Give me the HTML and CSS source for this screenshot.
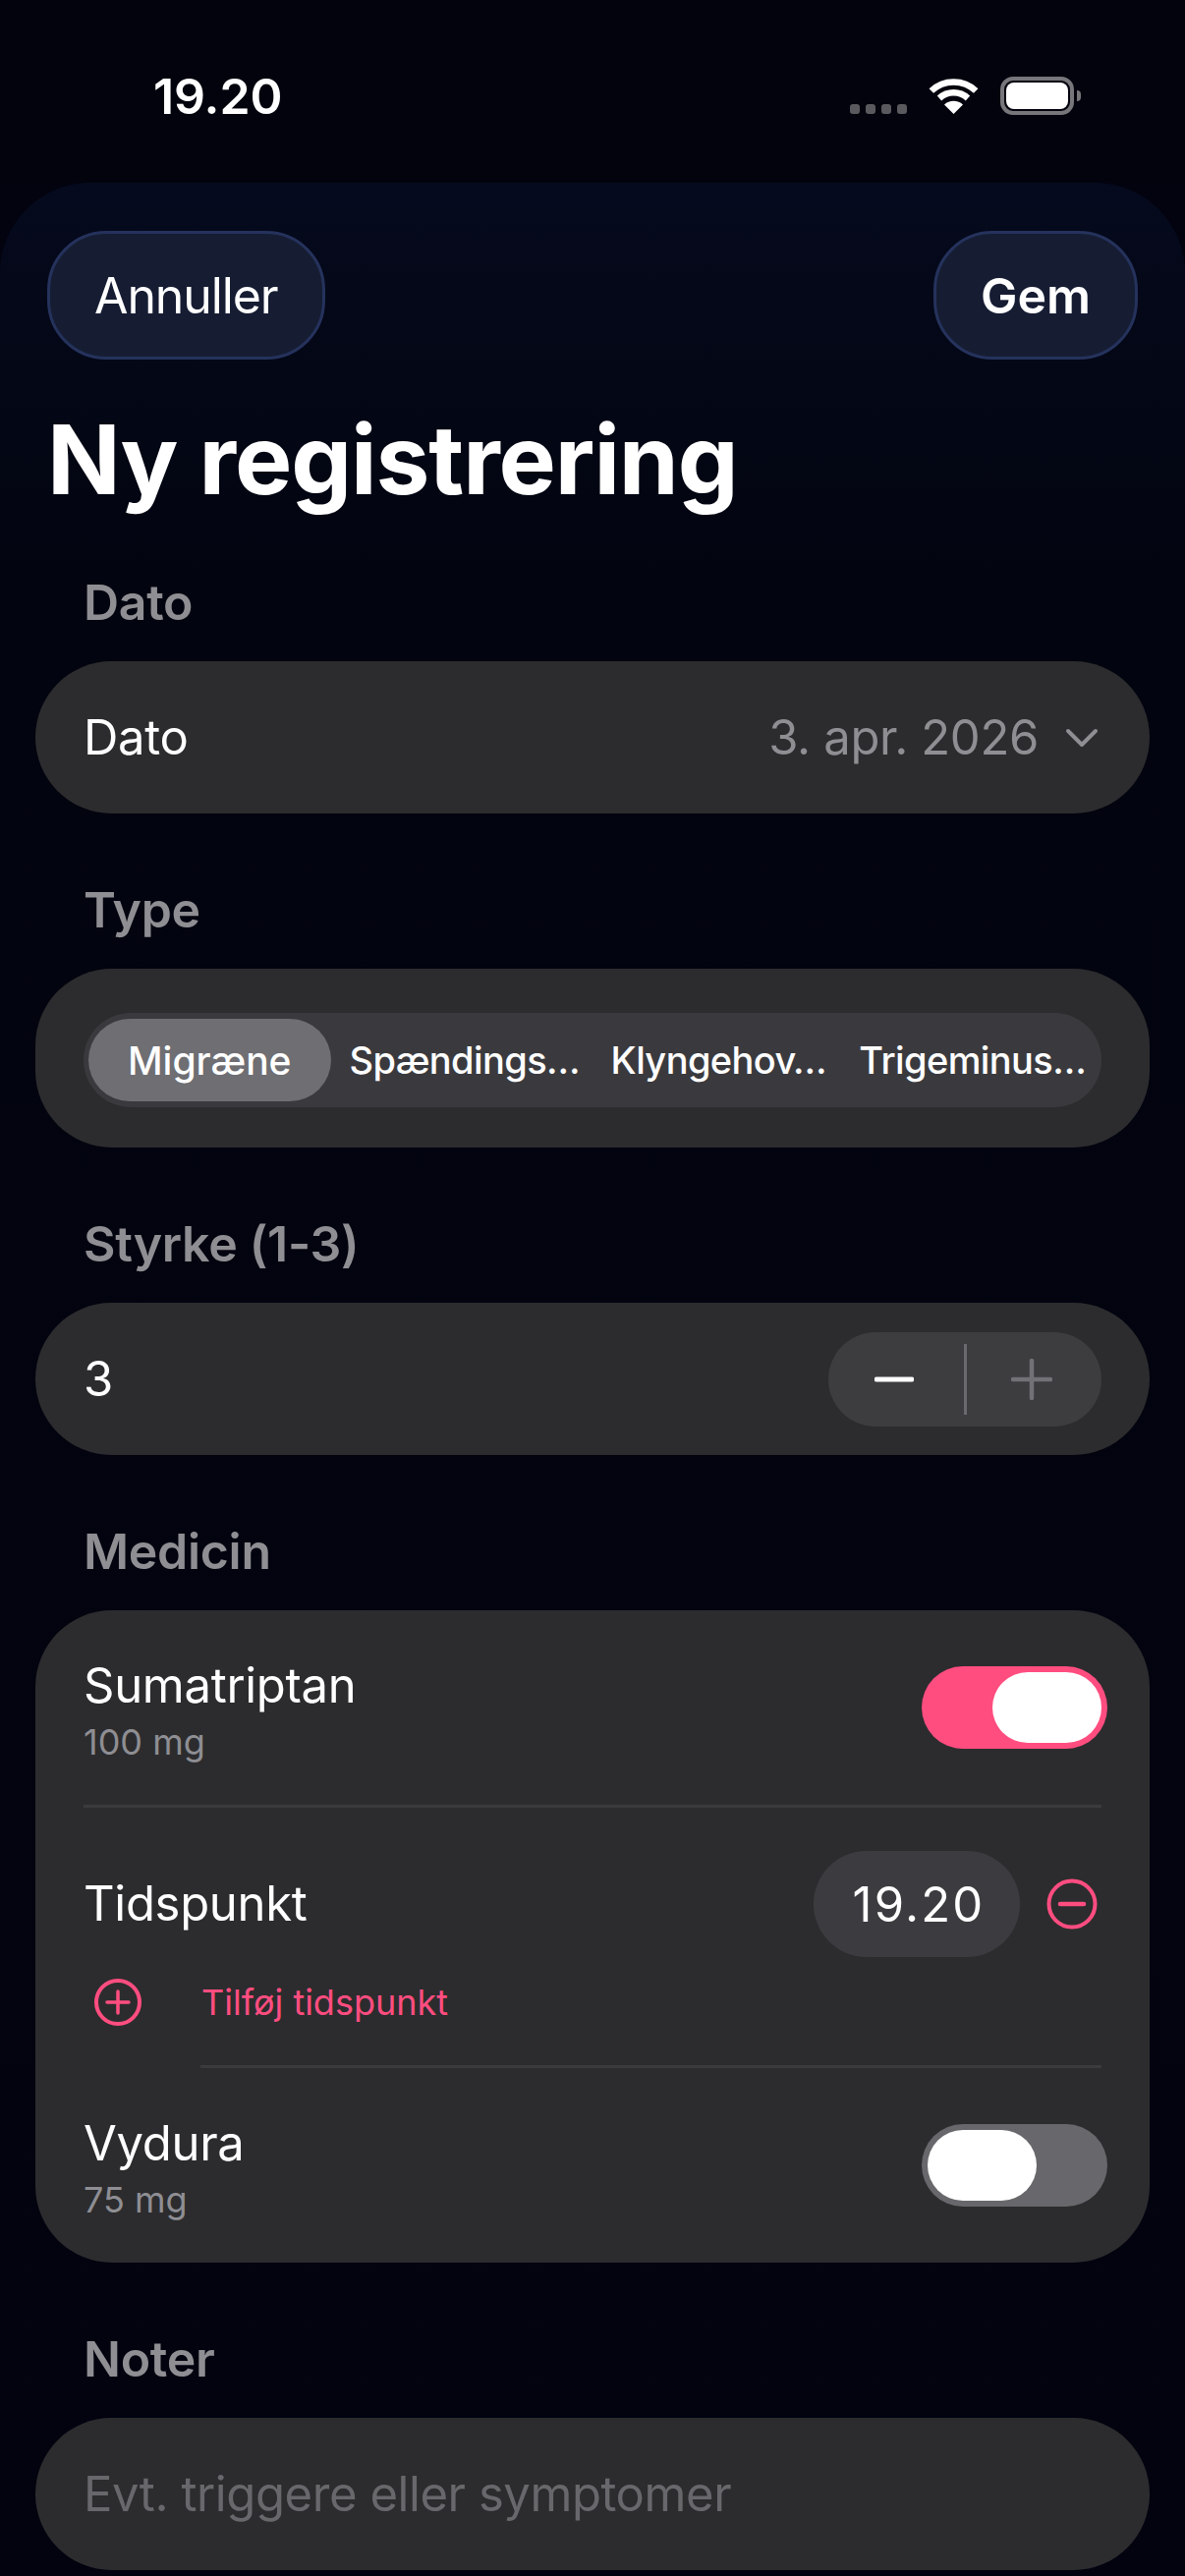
FILE: index.html
```html
<!DOCTYPE html>
<html lang="da">
<head>
<meta charset="utf-8">
<title>Ny registrering</title>
<link rel="stylesheet" href="styles.css">
</head>
<body>
<div class="phone">
  <header class="status">
    <span class="clock">19.20</span>
    <div class="status-icons">
      <div class="dots"><i></i><i></i><i></i><i></i></div>
      <svg class="wifi" viewBox="0 0 51 37" width="51" height="37"><path d="M25.5 37 16 27.5a14 14 0 0 1 19 0Z" fill="#fff"/><path d="M11 21a21.500 21.500 0 0 1 29 0" fill="none" stroke="#fff" stroke-width="6.500"/><path d="M2.800 13.500a33 33 0 0 1 45.400 0" fill="none" stroke="#fff" stroke-width="6.500"/></svg>
      <div class="battery"><div class="battery-fill"></div><div class="battery-nub"></div></div>
    </div>
  </header>
  <main class="sheet">
    <div class="nav">
      <button class="nav-btn">Annuller</button>
      <button class="nav-btn nav-btn-strong">Gem</button>
    </div>
    <h1 class="title">Ny registrering</h1>

    <h2 class="label label-first">Dato</h2>
    <div class="card row">
      <span class="text">Dato</span>
      <div class="date-value">
        <span class="muted">3. apr. 2026</span>
        <svg class="chevron" viewBox="0 0 34 20" width="34" height="20"><path d="M3 3 17 17 31 3" fill="none" stroke="#8e8e93" stroke-width="4" stroke-linecap="round" stroke-linejoin="round"/></svg>
      </div>
    </div>

    <h2 class="label">Type</h2>
    <div class="card type-card">
      <div class="segments">
        <div class="segment segment-on">Migræne</div>
        <div class="segment">Spændings…</div>
        <div class="segment">Klyngehov…</div>
        <div class="segment">Trigeminus…</div>
      </div>
    </div>

    <h2 class="label">Styrke (1-3)</h2>
    <div class="card row">
      <span class="text">3</span>
      <div class="stepper">
        <div class="step"><svg viewBox="0 0 40 40" width="40" height="40"><path d="M2 20h36" stroke="#fff" stroke-width="5" stroke-linecap="round"/></svg></div>
        <div class="step-divider"></div>
        <div class="step"><svg viewBox="0 0 42 42" width="42" height="42"><path d="M2 21h38M21 2v38" stroke="#717176" stroke-width="4.500" stroke-linecap="round"/></svg></div>
      </div>
    </div>

    <h2 class="label">Medicin</h2>
    <div class="card med-card">
      <div class="med-row">
        <div class="med-info">
          <span class="text">Sumatriptan</span>
          <span class="dose">100 mg</span>
        </div>
        <div class="switch switch-on"><div class="knob"></div></div>
      </div>
      <div class="rule"></div>
      <div class="time-row">
        <span class="text">Tidspunkt</span>
        <div class="time-pill">19.20</div>
        <svg class="remove" viewBox="0 0 52 52" width="52" height="52"><circle cx="26" cy="26" r="23.500" fill="none" stroke="#ff4d80" stroke-width="4"/><path d="M14 26h24" stroke="#ff4d80" stroke-width="4.500" stroke-linecap="round"/></svg>
      </div>
      <div class="add-row">
        <svg class="add" viewBox="0 0 48 48" width="48" height="48"><circle cx="24" cy="24" r="22" fill="none" stroke="#ff4d80" stroke-width="4"/><path d="M13 24h22M24 13v22" stroke="#ff4d80" stroke-width="3.500" stroke-linecap="round"/></svg>
        <span class="add-text">Tilføj tidspunkt</span>
      </div>
      <div class="rule rule-inset"></div>
      <div class="med-row">
        <div class="med-info">
          <span class="text">Vydura</span>
          <span class="dose">75 mg</span>
        </div>
        <div class="switch"><div class="knob"></div></div>
      </div>
    </div>

    <h2 class="label">Noter</h2>
    <div class="card row">
      <span class="placeholder">Evt. triggere eller symptomer</span>
    </div>
  </main>
</div>
</body>
</html>
```
FILE: styles.css
```css
* { box-sizing: border-box; }
html, body { margin: 0; padding: 0; }
body {
  width: 1206px;
  height: 2622px;
  overflow: hidden;
  background: #02030f;
  font-family: Inter, "Liberation Sans", sans-serif;
  color: #fff;
}
.phone { width: 1206px; height: 2622px; overflow: hidden; display: flex; flex-direction: column; }

/* status bar */
.status {
  height: 186px;
  flex: none;
  display: flex;
  justify-content: space-between;
  padding: 70px 113px 0 156px;
  background: #02030d;
}
.clock { font-size: 50px; font-weight: 600; line-height: 56px; letter-spacing: -0.1px; }
.status-icons { display: flex; align-items: flex-start; }
.dots { display: flex; gap: 6px; margin: 36px 22px 0 0; }
.dots i { width: 10px; height: 10px; border-radius: 3px; background: #5a5a5e; display: block; }
.wifi { margin: 9px 22px 0 0; }
.battery {
  position: relative;
  width: 75px;
  height: 39px;
  margin-top: 8px;
  border: 4px solid #77777b;
  border-radius: 13px;
  padding: 2px;
}
.battery-fill { width: 100%; height: 100%; background: #fff; border-radius: 8px; }
.battery-nub {
  position: absolute;
  right: -11px;
  top: 10px;
  width: 4px;
  height: 11px;
  background: #77777b;
  border-radius: 0 4px 4px 0;
}

/* sheet */
.sheet {
  flex: 1;
  background: linear-gradient(180deg, #050a1e 0, #040818 120px, #02040f 420px, #02030f 100%);
  border-radius: 92px 92px 0 0;
  padding: 49px 36px 0;
}
.nav { display: flex; justify-content: space-between; padding: 0 12px; }
.nav-btn {
  height: 131px;
  padding: 0 45px;
  border-radius: 60px;
  border: 3px solid #25325c;
  background: #161d33;
  color: #fff;
  font-family: inherit;
  font-size: 50px;
  font-weight: 400;
  letter-spacing: -1.1px;
}
.nav-btn-strong { font-weight: 600; letter-spacing: 0; }
.title {
  margin: 40px 0 0 12px;
  font-size: 98px;
  line-height: 124px;
  font-weight: 700;
  letter-spacing: -1.1px;
}
.label {
  margin: 67px 0 29px 49px;
  height: 62px;
  font-size: 50px;
  line-height: 62px;
  font-weight: 600;
  color: #8e8e93;
  letter-spacing: -0.3px;
}
.label-first { margin-top: 52px; }

.card { background: #2c2c2e; border-radius: 78px; }
.row {
  height: 155px;
  padding: 0 49px;
  display: flex;
  align-items: center;
  justify-content: space-between;
}
.text { font-size: 49px; line-height: 60px; letter-spacing: -0.3px; }
.muted { font-size: 49px; color: #8e8e93; letter-spacing: -0.35px; }
.date-value { display: flex; align-items: center; gap: 27px; margin-right: 3px; }

/* type segments */
.type-card { height: 182px; padding: 45px 49px 0; }
.segments {
  height: 96px;
  background: #3a3a3e;
  border-radius: 48px;
  display: grid;
  grid-template-columns: repeat(4, 1fr);
  padding: 6px 2px 6px 0;
}
.segment {
  display: flex;
  align-items: center;
  justify-content: center;
  font-size: 38px;
  font-weight: 500;
  letter-spacing: -0.6px;
  white-space: nowrap;
}
.segment-on {
  background: #6e6e73;
  border-radius: 42px;
  font-size: 39px;
  letter-spacing: 0;
  margin: 0 7px 0 5px;
}

/* stepper */
.stepper {
  width: 278px;
  height: 96px;
  border-radius: 48px;
  background: #3d3d40;
  display: flex;
  align-items: center;
}
.step { flex: 1; display: flex; align-items: center; justify-content: center; }
.step svg { margin-right: 4px; }
.step-divider { width: 3px; height: 72px; background: #6a6a6e; flex: none; }

/* medicin */
.med-card { height: 664px; padding: 0 49px; }
.med-row {
  height: 198px;
  display: flex;
  align-items: center;
  justify-content: space-between;
}
.med-info { display: flex; flex-direction: column; margin-top: 5px; }
.dose { font-size: 36px; line-height: 44px; color: #8e8e93; margin-top: 5px; }
.switch {
  width: 189px;
  height: 84px;
  margin-right: -6px;
  border-radius: 42px;
  background: #68686c;
  padding: 6px;
  display: flex;
}
.switch-on { background: #ff4d80; justify-content: flex-end; }
.knob { width: 111px; height: 72px; border-radius: 36px; background: #fff; }
.rule { height: 3px; background: #3b3b3e; }
.rule-inset { margin-left: 119px; margin-top: 34px; }
.time-row { display: flex; align-items: center; margin-top: 44px; height: 108px; }
.time-row .text { flex: 1; }
.time-pill {
  width: 210px;
  height: 108px;
  padding-left: 4px;
  border-radius: 54px;
  background: #3c3c40;
  display: flex;
  align-items: center;
  justify-content: center;
  font-size: 49px;
  letter-spacing: 2.2px;
}
.remove { margin: 0 4px 0 27px; }
.add-row { display: flex; align-items: center; height: 60px; margin-top: 16px; padding-left: 11px; }
.add-text { margin-left: 61px; font-size: 36px; color: #ff4d80; }

.placeholder { font-size: 49px; color: #68686c; letter-spacing: -0.43px; }
```
